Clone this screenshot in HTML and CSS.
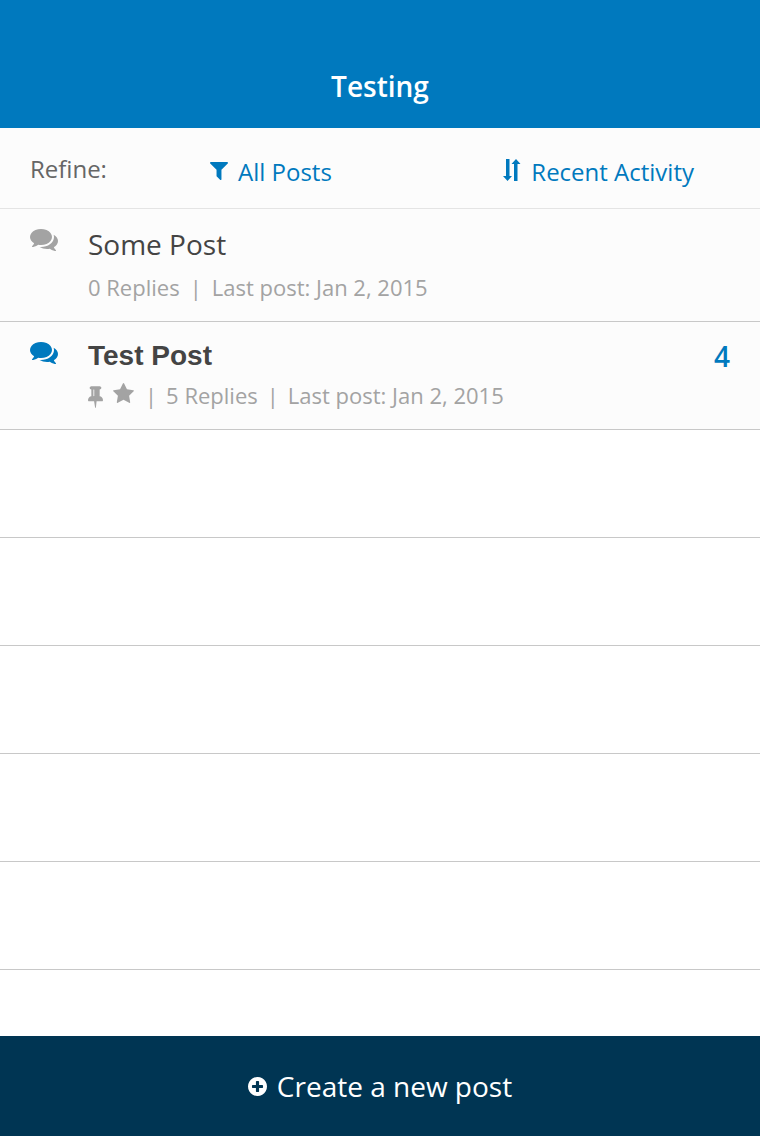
FILE: index.html
```html
<!DOCTYPE html>
<html lang="en">
<head>
<meta charset="utf-8">
<meta name="viewport" content="width=device-width, initial-scale=1">
<title>Testing</title>
<link rel="stylesheet" href="styles.css">
</head>
<body>
<svg class="sprite" aria-hidden="true">
  <symbol id="comments" viewBox="0 256 1792 1408"><path d="M1408 768q0 139-94 257t-256.5 186.5-353.5 68.5q-86 0-176-16-124 88-278 128-36 9-86 16h-3q-11 0-20.5-8t-11.5-21q-1-3-1-6.5t.5-6.5 2-6l2.5-5 3.5-5.5 4-5 4.5-5 4-4.5q5-6 23-25t26-29.5 22.5-29 25-38.5 20.5-44q-124-72-195-177t-71-224q0-139 94-257t256.5-186.500 353.500-68.500 353.500 68.500 256.500 186.500 94 257zm384 256q0 120-71 224.500t-195 176.500q10 24 20.500 44t25 38.500 22.500 29 26 29.500 23 25q1 1 4 4.500t4.500 5 4 5 3.500 5.500l2.500 5 2 6 .5 6.500-1 6.500q-3 14-13 22t-22 7q-50-7-86-16-154-40-278-128-90 16-176 16-271 0-472-132 58 4 88 4 161 0 309-45t264-129q125-92 192-212t67-254q0-77-23-152 129 71 204 178t75 230z"/></symbol>
</svg>
<header class="topbar"><h1 class="topbar-title">Testing</h1></header>
<section class="refine" aria-label="Refine posts">
  <span class="refine-label">Refine:</span>
  <button class="refine-option" type="button">
    <svg class="icon-filter" viewBox="197 256 1398 1408" aria-hidden="true"><path d="M1595 295q17 41-14 70l-493 493v742q0 42-39 59-13 5-25 5-27 0-45-19l-256-256q-19-19-19-45v-486l-493-493q-31-29-14-70 17-39 59-39h1280q42 0 59 39z"/></svg>
    All Posts
  </button>
  <button class="refine-option" type="button">
    <svg class="icon-sort" viewBox="0 0 18 22" aria-hidden="true"><path d="M3 0h3.500v17H9l-4.500 5L0 17h3zM11 22h3.500V5H17.500l-4.500-5-4.500 5H11z"/></svg>
    Recent Activity
  </button>
</section>
<main class="content">
  <ul class="posts">
    <li>
      <a class="post" href="#some-post">
        <svg class="icon-comments" aria-hidden="true"><use href="#comments"/></svg>
        <span class="post-body">
          <span class="post-title">Some Post</span>
          <span class="post-meta"><span>0 Replies</span><span>|</span><span>Last post: Jan 2, 2015</span></span>
        </span>
      </a>
    </li>
    <li>
      <a class="post post-unread" href="#test-post">
        <svg class="icon-comments" aria-hidden="true"><use href="#comments"/></svg>
        <span class="post-body">
          <span class="post-title">Test Post</span>
          <span class="post-meta">
            <span class="post-flags">
              <svg class="icon-pin" viewBox="320 128 1152 1664" role="img" aria-label="Pinned"><path d="M800 864v-448q0-14-9-23t-23-9-23 9-9 23v448q0 14 9 23t23 9 23-9 9-23zm672 352q0 26-19 45t-45 19h-429l-51 483q-2 12-10.500 20.500t-20.500 8.500h-1q-27 0-32-27l-76-485h-404q-26 0-45-19t-19-45q0-123 78.500-221.500t177.500-98.500v-512q-52 0-90-38t-38-90 38-90 90-38h640q52 0 90 38t38 90-38 90-90 38v512q99 0 177.500 98.500t78.500 221.500z"/></svg>
              <svg class="icon-star" viewBox="64 32 1664 1588" role="img" aria-label="Starred"><path d="M1728 647q0 22-26 48l-363 354 86 500q1 7 1 20 0 21-10.500 35.500t-30.500 14.500q-19 0-40-12l-449-236-449 236q-22 12-40 12-21 0-31.500-14.500t-10.500-35.500q0-6 2-20l86-500-364-354q-25-27-25-48 0-37 56-46l502-73 225-455q19-41 49-41t49 41l225 455 502 73q56 9 56 46z"/></svg>
            </span>
            <span>|</span><span>5 Replies</span><span>|</span><span>Last post: Jan 2, 2015</span>
          </span>
        </span>
        <span class="post-count">4</span>
      </a>
    </li>
  </ul>
</main>
<footer class="footer">
  <button class="create" type="button">
    <svg class="icon-plus" viewBox="128 128 1536 1536" aria-hidden="true"><path d="M1344 960v-128q0-26-19-45t-45-19h-256v-256q0-26-19-45t-45-19h-128q-26 0-45 19t-19 45v256h-256q-26 0-45 19t-19 45v128q0 26 19 45t45 19h256v256q0 26 19 45t45 19h128q26 0 45-19t19-45v-256h256q26 0 45-19t19-45zm320-64q0 209-103 385.500t-279.500 279.500-385.500 103-385.500-103-279.500-279.500-103-385.500 103-385.500 279.500-279.500 385.500-103 385.500 103 279.500 279.500 103 385.500z"/></svg>
    Create a new post
  </button>
</footer>
</body>
</html>
```

FILE: styles.css
```css
* {
  box-sizing: border-box;
}

body {
  margin: 0;
  min-height: 100vh;
  display: flex;
  flex-direction: column;
  background: #fff;
  font-family: "Open Sans", "Noto Sans", sans-serif;
}

svg {
  display: block;
  flex: none;
  fill: currentColor;
}

button {
  border: 0;
  padding: 0;
  background: none;
  font: inherit;
  color: inherit;
  cursor: pointer;
}

.sprite {
  position: absolute;
  width: 0;
  height: 0;
}

.topbar {
  padding: 66px 30px 22px;
  background: #0079be;
  color: #fff;
  text-align: center;
}

.topbar-title {
  margin: 0;
  font-size: 28px;
  line-height: 40px;
  font-weight: 600;
}

.refine {
  display: grid;
  grid-template-columns: 180px 1fr auto;
  align-items: start;
  padding: 23px 66px 18px 30px;
  border-bottom: 1px solid #e4e4e4;
  background: #fcfcfc;
  font-size: 24px;
  line-height: 36px;
}

.refine-label {
  color: #666;
}

.refine-option {
  display: flex;
  align-items: flex-start;
  gap: 10px;
  padding-top: 3px;
  color: #0079be;
}

.icon-filter {
  width: 18px;
  height: 18px;
  margin-top: 8px;
}

.icon-sort {
  width: 18px;
  height: 22px;
  margin-top: 5px;
}

.content {
  flex: 1;
  background: repeating-linear-gradient(#fff 0 107px, #c8c8c8 107px 108px) 0 221px no-repeat;
}

.posts {
  margin: 0;
  padding: 0;
  list-style: none;
}

.post {
  display: flex;
  align-items: flex-start;
  gap: 30px;
  padding: 15px 30px 18px;
  border-bottom: 1px solid #c8c8c8;
  background: #fcfcfc;
  color: #a3a3a3;
  text-decoration: none;
}

.icon-comments {
  width: 28px;
  height: 22px;
  margin-top: 5px;
}

.post-body {
  flex: 1;
  display: flex;
  flex-direction: column;
  gap: 7px;
}

.post-title {
  color: #444;
  font-size: 28px;
  line-height: 40px;
}

.post-meta {
  display: flex;
  gap: 10px;
  font-size: 22px;
  line-height: 32px;
}

.post-unread {
  padding-top: 14px;
}

.post-unread .icon-comments {
  margin-top: 6px;
  color: #0079be;
}

.post-unread .post-body {
  gap: 3px;
}

.post-unread .post-title {
  font-family: "Liberation Sans", Arial, sans-serif;
  font-weight: 700;
}

.post-unread .post-meta {
  gap: 9px;
}

.post-flags {
  display: flex;
  gap: 10px;
  margin-right: 2px;
}

.icon-pin {
  width: 15px;
  height: 22px;
  margin-top: 7px;
}

.icon-star {
  width: 21px;
  height: 20px;
  margin-top: 4px;
}

.post-count {
  color: #0079be;
  font-size: 28px;
  line-height: 40px;
  font-weight: 600;
}

.footer {
  background: #003553;
  color: #fff;
}

.create {
  display: flex;
  width: 100%;
  align-items: center;
  justify-content: center;
  gap: 10px;
  padding: 30px;
  font-size: 28px;
  line-height: 40px;
}

.icon-plus {
  width: 19px;
  height: 19px;
}
```
